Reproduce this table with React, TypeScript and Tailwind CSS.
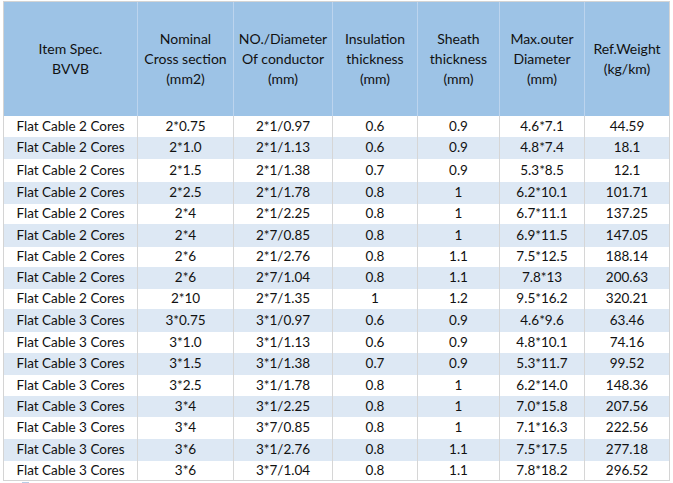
import React from "react";

const rows: string[][] = [
  ["Flat Cable 2 Cores", "2*0.75", "2*1/0.97", "0.6", "0.9", "4.6*7.1", "44.59"],
  ["Flat Cable 2 Cores", "2*1.0", "2*1/1.13", "0.6", "0.9", "4.8*7.4", "18.1"],
  ["Flat Cable 2 Cores", "2*1.5", "2*1/1.38", "0.7", "0.9", "5.3*8.5", "12.1"],
  ["Flat Cable 2 Cores", "2*2.5", "2*1/1.78", "0.8", "1", "6.2*10.1", "101.71"],
  ["Flat Cable 2 Cores", "2*4", "2*1/2.25", "0.8", "1", "6.7*11.1", "137.25"],
  ["Flat Cable 2 Cores", "2*4", "2*7/0.85", "0.8", "1", "6.9*11.5", "147.05"],
  ["Flat Cable 2 Cores", "2*6", "2*1/2.76", "0.8", "1.1", "7.5*12.5", "188.14"],
  ["Flat Cable 2 Cores", "2*6", "2*7/1.04", "0.8", "1.1", "7.8*13", "200.63"],
  ["Flat Cable 2 Cores", "2*10", "2*7/1.35", "1", "1.2", "9.5*16.2", "320.21"],
  ["Flat Cable 3 Cores", "3*0.75", "3*1/0.97", "0.6", "0.9", "4.6*9.6", "63.46"],
  ["Flat Cable 3 Cores", "3*1.0", "3*1/1.13", "0.6", "0.9", "4.8*10.1", "74.16"],
  ["Flat Cable 3 Cores", "3*1.5", "3*1/1.38", "0.7", "0.9", "5.3*11.7", "99.52"],
  ["Flat Cable 3 Cores", "3*2.5", "3*1/1.78", "0.8", "1", "6.2*14.0", "148.36"],
  ["Flat Cable 3 Cores", "3*4", "3*1/2.25", "0.8", "1", "7.0*15.8", "207.56"],
  ["Flat Cable 3 Cores", "3*4", "3*7/0.85", "0.8", "1", "7.1*16.3", "222.56"],
  ["Flat Cable 3 Cores", "3*6", "3*1/2.76", "0.8", "1.1", "7.5*17.5", "277.18"],
  ["Flat Cable 3 Cores", "3*6", "3*7/1.04", "0.8", "1.1", "7.8*18.2", "296.52"],
];

const heights = [
  "h-[21px]", "h-[22px]", "h-[23px]", "h-[22px]", "h-[20px]", "h-[23px]", "h-[20px]", "h-[22px]", "h-[20px]",
  "h-[23px]", "h-[21px]", "h-[22px]", "h-[21px]", "h-[21px]", "h-[22px]", "h-[22px]", "h-[19px]",
];

const headers: string[][] = [
  ["Item Spec.", "BVVB"],
  ["Nominal", "Cross section", "(mm2)"],
  ["NO./Diameter", "Of conductor", "(mm)"],
  ["Insulation", "thickness", "(mm)"],
  ["Sheath", "thickness", "(mm)"],
  ["Max.outer", "Diameter", "(mm)"],
  ["Ref.Weight", "(kg/km)"],
];

const grid = "grid grid-cols-[133px_96px_99px_85px_82px_85px_85px]";

export default function App() {
  return (
    <div className="w-[673px] h-[483px] bg-white overflow-hidden pt-[1px] pl-[3px] text-[#111111] text-[13.5px]" style={{ fontFamily: "Lato, 'Open Sans', sans-serif" }}>
      <div className="w-[667px] border border-[#d4d4d4]">
        <div className={`${grid} h-[114px] bg-[#9dc3e6] text-[14px]`}>
          {headers.map((h, i) => (
            <div
              key={i}
              className={`flex flex-col items-center justify-center leading-[20px] text-center ${i > 0 ? "border-l border-[#bcd4ee]" : ""}`}
            >
              {h.map((t, j) => (
                <span key={j}>{t}</span>
              ))}
            </div>
          ))}
        </div>
        {rows.map((r, ri) => (
          <div key={ri} className={`${grid} ${heights[ri]} ${ri % 2 === 1 ? "bg-[#dde8f4]" : "bg-white"}`}>
            {r.map((c, ci) => (
              <div
                key={ci}
                className={`flex items-center justify-center leading-none ${ci > 0 ? "border-l border-[#d6d6d6]" : ""}`}
              >
                {c}
              </div>
            ))}
          </div>
        ))}
      </div>
      <div className="ml-[19px] mt-[1px] w-[7px] h-[2px] bg-[#b7cde6]" />
    </div>
  );
}
